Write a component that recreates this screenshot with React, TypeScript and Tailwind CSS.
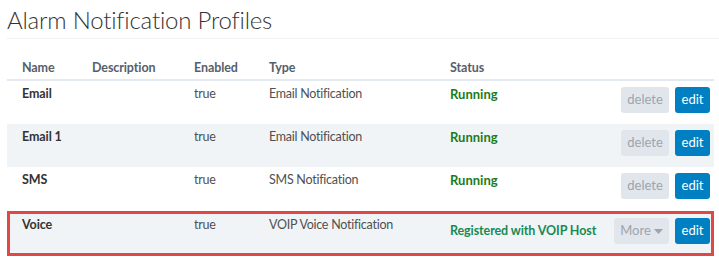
import React from "react"

type Row = {
  name: string
  enabled: string
  type: string
  status: string
  voip?: boolean
}

const rows: Row[] = [
  { name: "Email", enabled: "true", type: "Email Notification", status: "Running" },
  { name: "Email 1", enabled: "true", type: "Email Notification", status: "Running" },
  { name: "SMS", enabled: "true", type: "SMS Notification", status: "Running" },
  { name: "Voice", enabled: "true", type: "VOIP Voice Notification", status: "Registered with VOIP Host", voip: true },
]

const cols = "grid grid-cols-[70px_102px_75px_181px_1fr_auto] pl-[15px] pr-[4px]"

export default function App() {
  return (
    <div className="w-[719px] h-[258px] bg-white overflow-hidden font-['Lato',sans-serif] text-[12.5px] tracking-[-0.25px] text-[#505050]">
      {/* Header */}
      <h1 className="pl-[7px] pt-[6px] h-[38px] text-[24px] leading-[28px] font-light text-[#333] tracking-[-0.2px]">
        Alarm Notification Profiles
      </h1>
      <div className="ml-[7px] border-t border-[#f0f2f4]" />

      <div className="ml-[7px] w-[707px]">
        <div className={`${cols} h-[42px] items-end pb-[1px] border-b-2 border-[#e3e9f0] font-bold text-[12.5px] tracking-[-0.1px] text-[#56606c]`}>
          <div>Name</div>
          <div>Description</div>
          <div>Enabled</div>
          <div>Type</div>
          <div>Status</div>
          <div />
        </div>

        {rows.map((r, i) => (
          <div
            key={r.name}
            className={`${cols} items-start ${i % 2 === 1 ? "bg-[#f1f4f7]" : "bg-white"} ${
              r.voip ? "mt-[1px] h-[45px] bg-[#f1f4f7] outline-3 outline-[#e04848] -outline-offset-3" : "h-[43px]"
            }`}
          >
            <div className={`${r.voip ? "pt-[5px]" : "pt-[4px]"} leading-[18px] font-bold tracking-[-0.1px] text-[#333]`}>{r.name}</div>
            <div />
            <div className={`${r.voip ? "pt-[5px]" : "pt-[4px]"} leading-[18px]`}>{r.enabled}</div>
            <div className={`${r.voip ? "pt-[5px]" : "pt-[4px]"} leading-[18px]`}>{r.type}</div>
            {r.voip ? (
              <div className="pt-[11px] leading-[18px] font-bold tracking-[-0.1px] text-[#188a52]">{r.status}</div>
            ) : (
              <div className="pt-[4px] leading-[18px] font-bold text-[13px] tracking-normal text-[#1b7d1b]">{r.status}</div>
            )}
            <div className={`flex gap-[6px] tracking-normal ${r.voip ? "pt-[7px]" : "pt-[6px]"}`}>
              {r.voip ? (
                <button className="h-[26px] w-[55px] rounded-[3px] bg-[#e1e6ec] text-[#9ca4ae] text-[13px] flex items-center justify-center gap-[3px]">
                  More
                  <svg width="9" height="5" viewBox="0 0 9 5">
                    <path d="M0 0h9L4.5 5z" fill="#9ca4ae" />
                  </svg>
                </button>
              ) : (
                <button className="h-[26px] w-[48px] rounded-[3px] bg-[#e1e6ec] text-[#9ca4ae] text-[13px]">delete</button>
              )}
              <button className="h-[26px] w-[35px] rounded-[3px] bg-[#0080c3] text-white text-[13px]">edit</button>
            </div>
          </div>
        ))}
      </div>
    </div>
  )
}
